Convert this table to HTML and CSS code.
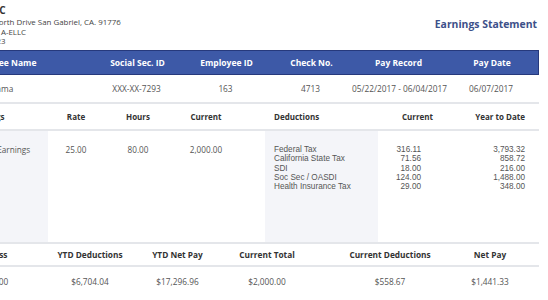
FILE: index.html
```html
<!DOCTYPE html>
<html>
<head>
<meta charset="utf-8">
<link rel="stylesheet" href="styles.css">
</head>
<body>
<div class="page">
  <header class="top">
    <div class="company">
      <div class="co-name">ACME LLC</div>
      <div>1234 Ainsworth Drive San Gabriel, CA. 91776</div>
      <div>Account ID: A-ELLC</div>
      <div>Tel: 555 0123</div>
    </div>
    <div class="title">Earnings Statement</div>
  </header>

  <div class="info-head">
    <div class="i-first">Employee Name</div>
    <div>Social Sec. ID</div>
    <div>Employee ID</div>
    <div>Check No.</div>
    <div>Pay Record</div>
    <div>Pay Date</div>
  </div>
  <div class="info-row">
    <div class="i-first">Emma</div>
    <div>XXX-XX-7293</div>
    <div>163</div>
    <div>4713</div>
    <div>05/22/2017 - 06/04/2017</div>
    <div>06/07/2017</div>
  </div>

  <div class="earn-head">
    <div class="c-desc head-desc">Earnings</div>
    <div class="c-mid">Rate</div>
    <div class="c-mid">Hours</div>
    <div class="c-mid">Current</div>
    <div></div>
    <div class="c-ded">Deductions</div>
    <div class="c-cur">Current</div>
    <div class="c-ytd">Year to Date</div>
  </div>
  <div class="earn-body">
    <div class="c-desc shade">Regular Earnings</div>
    <div class="c-mid">25.00</div>
    <div class="c-mid">80.00</div>
    <div class="c-mid">2,000.00</div>
    <div></div>
    <div class="c-ded shade list">
      <div>Federal Tax</div>
      <div>California State Tax</div>
      <div>SDI</div>
      <div>Soc Sec / OASDI</div>
      <div>Health Insurance Tax</div>
    </div>
    <div class="c-cur v list">
      <div>316.11</div>
      <div>71.56</div>
      <div>18.00</div>
      <div>124.00</div>
      <div>29.00</div>
    </div>
    <div class="c-ytd list">
      <div>3,793.32</div>
      <div>858.72</div>
      <div>216.00</div>
      <div>1,488.00</div>
      <div>348.00</div>
    </div>
  </div>

  <div class="sum-head">
    <div class="s-first">YTD Gross</div>
    <div>YTD Deductions</div>
    <div>YTD Net Pay</div>
    <div>Current Total</div>
    <div class="s-ded">Current Deductions</div>
    <div class="s-net">Net Pay</div>
  </div>
  <div class="sum-row">
    <div class="s-first">$24,001.00</div>
    <div>$6,704.04</div>
    <div>$17,296.96</div>
    <div>$2,000.00</div>
    <div class="s-ded">$558.67</div>
    <div class="s-net">$1,441.33</div>
  </div>
</div>
</body>
</html>
```

FILE: styles.css
```css
html, body {
  margin: 0;
  padding: 0;
  background: #ffffff;
}
body {
  overflow: hidden;
  font-family: "Open Sans", "Liberation Sans", sans-serif;
  color: #555;
  white-space: nowrap;
}
.page {
  width: 604px;
  margin-left: -65px;
}

/* header */
.top {
  display: flex;
  justify-content: space-between;
  align-items: flex-start;
  height: 50px;
}
.company {
  padding-left: 22px;
  padding-top: 4px;
  font-size: 7.9px;
  line-height: 9.5px;
  color: #444;
}
.co-name {
  font-size: 10px;
  font-weight: 700;
  line-height: 12px;
  color: #333;
  margin-bottom: 2px;
}
.title {
  padding-top: 18px;
  padding-right: 2px;
  font-size: 10.4px;
  line-height: 12px;
  font-weight: 700;
  color: #3d5089;
}

/* employee info */
.info-head,
.info-row {
  display: grid;
  grid-template-columns: 156px 91px 87px 83px 91px 96px;
  align-items: center;
  text-align: center;
}
.info-head {
  box-sizing: border-box;
  height: 25px;
  background: #3d59a7;
  border: 1px solid #26397c;
  color: #fff;
  font-weight: 700;
  font-size: 8.5px;
}
.info-row {
  height: 27px;
  color: #555;
  font-size: 8.3px;
  border-bottom: 2px solid #e4e6ea;
}
.i-first {
  padding-right: 24px;
}

/* earnings / deductions */
.earn-head,
.earn-body {
  display: grid;
  grid-template-columns: 113px 56px 68px 68px 25px 113px 55px 106px;
}
.earn-head {
  height: 25px;
  align-items: center;
  font-weight: 700;
  font-size: 8px;
  color: #333;
  border-bottom: 2px solid #e4e6ea;
}
.earn-body {
  height: 111px;
  color: #555;
  font-size: 8.2px;
  line-height: 9.3px;
  border-bottom: 2px solid #e4e6ea;
}
.earn-body > div {
  padding-top: 14px;
}
.earn-body > .list {
  font-family: "Liberation Sans", "Open Sans", sans-serif;
  font-size: 8.2px;
  line-height: 9.3px;
}
.shade {
  background: #f4f5f9;
}
.c-desc {
  padding-left: 31px;
}
.c-desc.head-desc {
  padding-left: 35px;
}
.c-mid {
  text-align: center;
}
.c-ded {
  padding-left: 9px;
}
.c-cur {
  text-align: right;
}
.c-cur.v {
  padding-right: 12px;
}
.c-ytd {
  text-align: right;
  padding-right: 14px;
}

/* summary */
.sum-head,
.sum-row {
  display: grid;
  grid-template-columns: 112px 86px 89px 90px 134px 93px;
  align-items: center;
  text-align: center;
}
.sum-head {
  height: 21px;
  font-weight: 700;
  font-size: 8.3px;
  color: #333;
  border-bottom: 2px solid #e4e6ea;
}
.sum-row {
  height: 28px;
  font-size: 8.3px;
  color: #555;
}
.s-first {
  text-align: left;
  padding-left: 31px;
}
.s-ded {
  padding-left: 22px;
}
.s-net {
  padding-right: 5px;
}
```
